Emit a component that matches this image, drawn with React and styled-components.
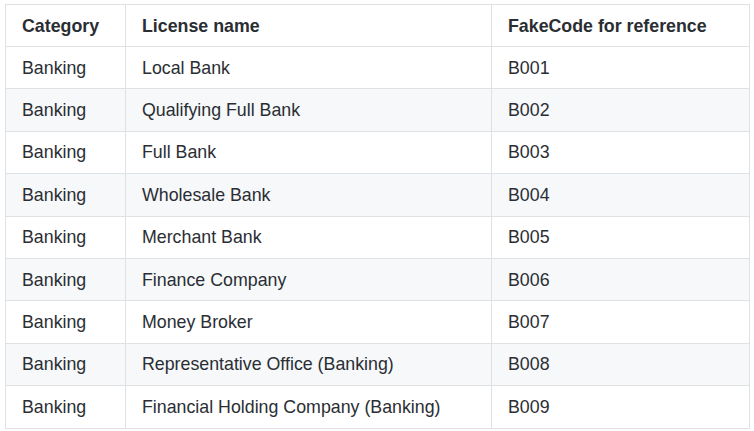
import React from "react";
import styled, { createGlobalStyle } from "styled-components";

const Global = createGlobalStyle`
  html, body { margin: 0; padding: 0; background: #ffffff; }
  body { font-family: "Liberation Sans", Arial, Helvetica, sans-serif; color: #2a2e33; }
`;

const Page = styled.div`
  padding: 4px 5px 0 5px;
`;

const Table = styled.table`
  border-collapse: collapse;
  border-spacing: 0;
  width: 744px;
  table-layout: fixed;
  font-size: 17.8px;
  line-height: 24px;
`;

const Col = styled.col`
  width: ${(p) => p.$w}px;
`;

const Row = styled.tr`
  background: ${(p) => (p.$shaded ? "#f6f8fa" : "#ffffff")};
  height: ${(p) => (p.$head ? "42px" : "42.4px")};
`;

const Head = styled.th`
  border: 1px solid #dfe2e5;
  padding: 0 16px;
  text-align: left;
  font-weight: 700;
  white-space: nowrap;
`;

const Cell = styled.td`
  border: 1px solid #dfe2e5;
  padding: 0 16px;
  text-align: left;
  font-weight: 400;
  white-space: nowrap;
`;

const rows = [
  ["Banking", "Local Bank", "B001"],
  ["Banking", "Qualifying Full Bank", "B002"],
  ["Banking", "Full Bank", "B003"],
  ["Banking", "Wholesale Bank", "B004"],
  ["Banking", "Merchant Bank", "B005"],
  ["Banking", "Finance Company", "B006"],
  ["Banking", "Money Broker", "B007"],
  ["Banking", "Representative Office (Banking)", "B008"],
  ["Banking", "Financial Holding Company (Banking)", "B009"],
];

export default function App() {
  return (
    <>
      <Global />
      <Page>
        <Table>
          <colgroup>
            <Col $w={120} />
            <Col $w={366} />
            <Col $w={258} />
          </colgroup>
          <thead>
            <Row $head>
              <Head>Category</Head>
              <Head>License name</Head>
              <Head>FakeCode for reference</Head>
            </Row>
          </thead>
          <tbody>
            {rows.map((r, i) => (
              <Row key={r[2]} $shaded={i % 2 === 1}>
                <Cell>{r[0]}</Cell>
                <Cell>{r[1]}</Cell>
                <Cell>{r[2]}</Cell>
              </Row>
            ))}
          </tbody>
        </Table>
      </Page>
    </>
  );
}
